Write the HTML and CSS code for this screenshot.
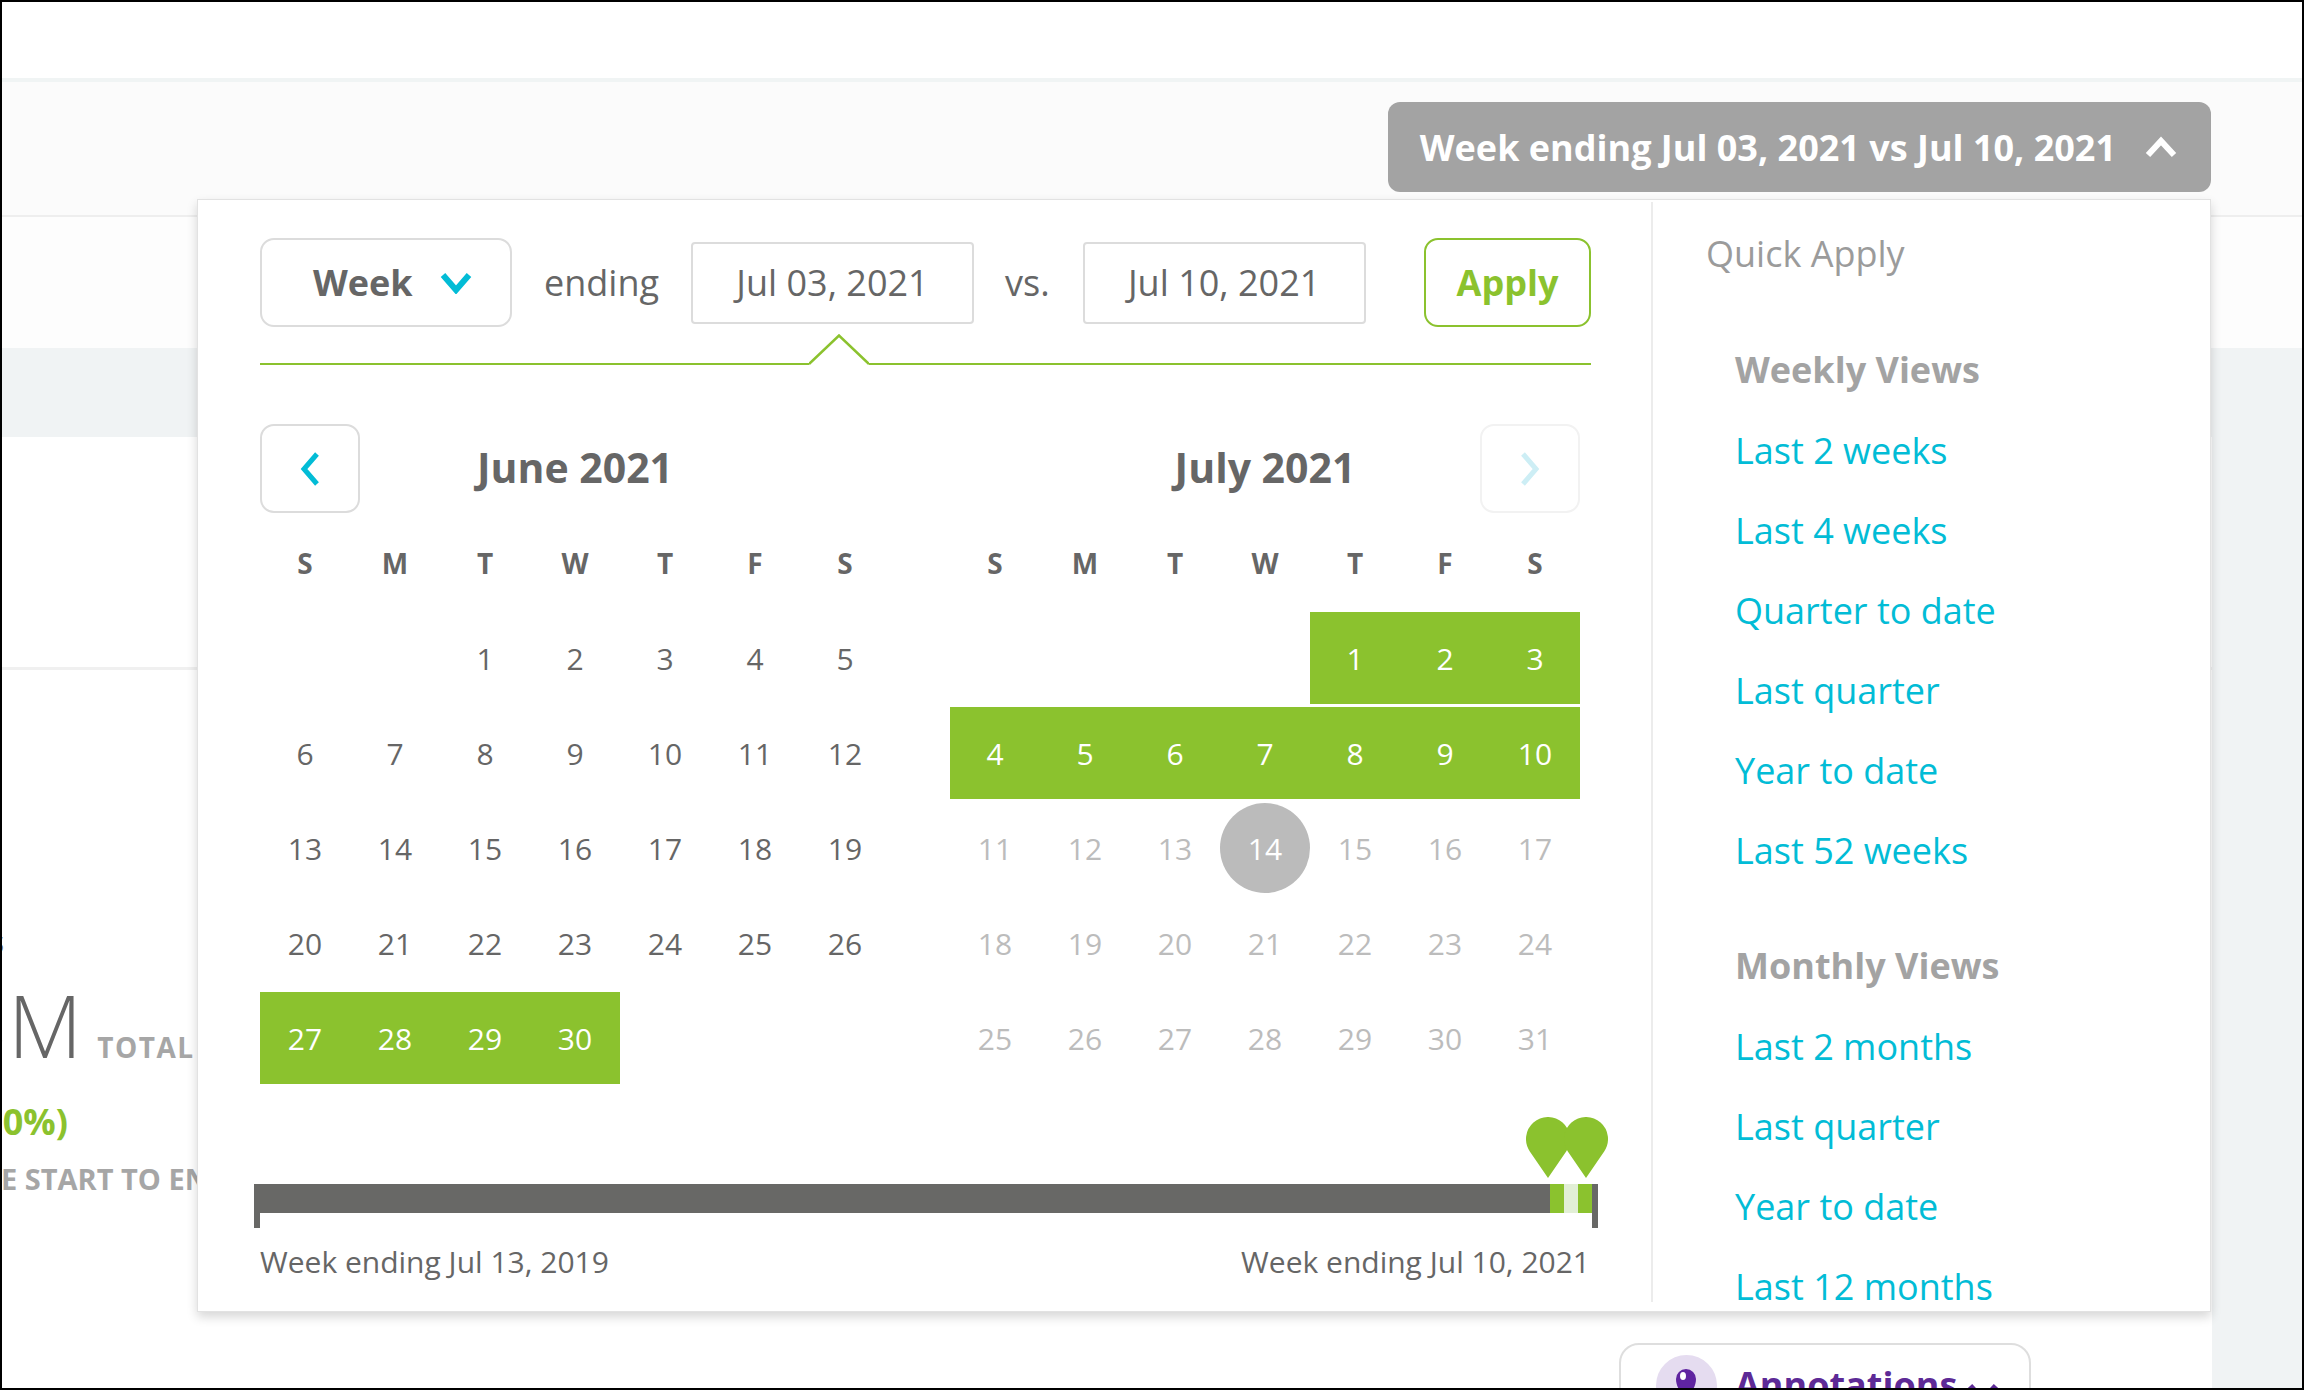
FILE: index.html
```html
<!DOCTYPE html>
<html lang="en">
<head>
<meta charset="utf-8">
<title>Date range picker</title>
<link rel="stylesheet" href="styles.css">
</head>
<body>
<div class="frame">
  <div class="topbar"></div>
  <div class="header">
    <div class="range">
      <div class="range-btn">
        <span>Week ending Jul 03, 2021 vs Jul 10, 2021</span>
        <svg class="caret" viewBox="0 0 32 22" width="32" height="22"><polyline points="3,19 16,5 29,19" fill="none" stroke="#fff" stroke-width="6"/></svg>
      </div>
      <div class="popup">
        <div class="picker">
          <div class="controls">
            <div class="select">
              <span>Week</span>
              <svg viewBox="0 0 32 22" width="32" height="22"><polyline points="3,3 16,18 29,3" fill="none" stroke="#02bcd6" stroke-width="6"/></svg>
            </div>
            <span class="word ending">ending</span>
            <div class="field">Jul 03, 2021</div>
            <span class="word vs">vs.</span>
            <div class="field field2">Jul 10, 2021</div>
            <div class="apply">Apply</div>
          </div>
          <div class="rule">
            <svg class="notch" viewBox="0 0 60 31" width="60" height="31"><polygon points="0,31 0,29 30,1 60,29 60,31" fill="#fff"/><polyline points="0,30 30,1.5 60,30" fill="none" stroke="#8bc22e" stroke-width="2.5"/></svg>
          </div>
          <div class="months">
            <div class="month">
              <div class="mhead">
                <div class="nav"><svg viewBox="0 0 22 34" width="22" height="34"><polyline points="18,2 5,17 18,32" fill="none" stroke="#02bcd6" stroke-width="5"/></svg></div>
                <div class="mtitle">June 2021</div>
                <div></div>
              </div>
              <div class="dow"><span>S</span><span>M</span><span>T</span><span>W</span><span>T</span><span>F</span><span>S</span></div>
              <div class="days">
                <span></span><span></span><span>1</span><span>2</span><span>3</span><span>4</span><span>5</span>
                <span>6</span><span>7</span><span>8</span><span>9</span><span>10</span><span>11</span><span>12</span>
                <span>13</span><span>14</span><span>15</span><span>16</span><span>17</span><span>18</span><span>19</span>
                <span>20</span><span>21</span><span>22</span><span>23</span><span>24</span><span>25</span><span>26</span>
                <span class="sel">27</span><span class="sel">28</span><span class="sel">29</span><span class="sel">30</span><span></span><span></span><span></span>
              </div>
            </div>
            <div class="month">
              <div class="mhead">
                <div></div>
                <div class="mtitle">July 2021</div>
                <div class="nav off"><svg viewBox="0 0 22 34" width="22" height="34"><polyline points="4,2 17,17 4,32" fill="none" stroke="#cdeef5" stroke-width="5"/></svg></div>
              </div>
              <div class="dow"><span>S</span><span>M</span><span>T</span><span>W</span><span>T</span><span>F</span><span>S</span></div>
              <div class="days">
                <span></span><span></span><span></span><span></span><span class="sel">1</span><span class="sel">2</span><span class="sel">3</span>
                <span class="sel">4</span><span class="sel">5</span><span class="sel">6</span><span class="sel">7</span><span class="sel">8</span><span class="sel">9</span><span class="sel">10</span>
                <span class="fut">11</span><span class="fut">12</span><span class="fut">13</span><span class="today"><i>14</i></span><span class="fut">15</span><span class="fut">16</span><span class="fut">17</span>
                <span class="fut">18</span><span class="fut">19</span><span class="fut">20</span><span class="fut">21</span><span class="fut">22</span><span class="fut">23</span><span class="fut">24</span>
                <span class="fut">25</span><span class="fut">26</span><span class="fut">27</span><span class="fut">28</span><span class="fut">29</span><span class="fut">30</span><span class="fut">31</span>
              </div>
            </div>
          </div>
          <div class="timeline">
            <div class="pins">
              <svg viewBox="0 0 44 61" width="44" height="61"><path d="M22 61 L3.83 34.4 A22 22 0 1 1 40.17 34.4 Z" fill="#8bc22e"/></svg>
              <svg class="pin2" viewBox="0 0 44 61" width="44" height="61"><path d="M22 61 L3.83 34.4 A22 22 0 1 1 40.17 34.4 Z" fill="#8bc22e"/></svg>
            </div>
            <div class="track">
              <span class="tick"></span>
              <div class="bar"><span class="seg g"></span><span class="seg l"></span><span class="seg g"></span></div>
              <span class="tick"></span>
            </div>
            <div class="ends"><span>Week ending Jul 13, 2019</span><span>Week ending Jul 10, 2021</span></div>
          </div>
        </div>
        <div class="quick">
          <div class="qa-title">Quick Apply</div>
          <div class="qgroup">
            <div class="qhead">Weekly Views</div>
            <div class="qlink">Last 2 weeks</div>
            <div class="qlink">Last 4 weeks</div>
            <div class="qlink">Quarter to date</div>
            <div class="qlink">Last quarter</div>
            <div class="qlink">Year to date</div>
            <div class="qlink">Last 52 weeks</div>
          </div>
          <div class="qgroup">
            <div class="qhead">Monthly Views</div>
            <div class="qlink">Last 2 months</div>
            <div class="qlink">Last quarter</div>
            <div class="qlink">Year to date</div>
            <div class="qlink">Last 12 months</div>
          </div>
        </div>
      </div>
    </div>
  </div>
  <div class="subheader"></div>
  <div class="band"></div>
  <div class="main">
    <div class="card">
      <div class="card-top"></div>
      <div class="stats">
        <div class="cut-row l1"><span class="lead">Conversions</span></div>
        <div class="cut-row l2"><span class="lead">24.3</span>M<span class="total">TOTAL</span></div>
        <div class="cut-row l3"><span class="lead">(+ 0%)</span></div>
        <div class="cut-row l4"><span class="lead">FROM TH</span>E START TO END OF PERIOD</div>
      </div>
      <div class="annot-row">
        <div class="annot">
          <span class="annot-ic"><svg viewBox="0 0 61 61" width="61" height="61"><path d="M30 46 C27 40 20 33 20 24 A10 10 0 0 1 40 24 C40 33 33 40 30 46 Z" fill="#5f24a0"/><ellipse cx="27" cy="21" rx="3" ry="4" fill="#fff"/></svg></span>
          <span class="annot-text">Annotations</span>
          <svg class="annot-chev" viewBox="0 0 32 22" width="32" height="22"><polyline points="3,3 16,17 29,3" fill="none" stroke="#5d2a96" stroke-width="6"/></svg>
        </div>
      </div>
    </div>
    <div class="aside"></div>
  </div>
</div>
</body>
</html>
```
FILE: styles.css
```css
* { box-sizing: border-box; margin: 0; padding: 0; }
html, body { background: #fff; }
body { margin: 0; font-family: "Open Sans", "DejaVu Sans", sans-serif; color: #666; }

.frame { width: 2304px; height: 1390px; border: 2px solid #000; overflow: hidden; display: flex; flex-direction: column; background: #fff; }
.topbar { height: 80px; flex: none; background: #fff; border-bottom: 4px solid #f0f4f4; }
.header { height: 135px; flex: none; display: flex; justify-content: flex-end; align-items: flex-start; padding: 20px 91px 0 0; background: #fbfbfb; border-bottom: 2px solid #eeeeee; position: relative; z-index: 5; }
.subheader { height: 131px; flex: none; background: #fdfdfd; }
.band { height: 89px; flex: none; background: #f0f3f4; }
.main { flex: 1; display: flex; background: #f0f3f4; min-height: 0; }
.card { width: 2210px; flex: none; background: #fff; overflow: hidden; }
.aside { flex: 1; }

/* header range button */
.range { position: relative; }
.range-btn { height: 90px; display: flex; align-items: center; gap: 29px; padding: 0 34px 0 32px; background: #a3a3a3; border-radius: 12px; color: #fff; font-weight: 700; font-size: 36px; white-space: nowrap; }
.caret { display: block; }

/* popup */
.popup { position: absolute; right: 0; top: 97px; width: 2014px; height: 1113px; background: #fff; border: 1px solid #e2e2e2; box-shadow: 0 5px 10px rgba(0,0,0,0.16); display: flex; }
.picker { width: 1453px; flex: none; padding: 38px 60px 0 62px; }

.controls { display: flex; align-items: center; height: 89px; }
.select { width: 252px; height: 89px; flex: none; border: 2px solid #dcdcdc; border-radius: 14px; display: flex; align-items: center; gap: 27px; padding-left: 51px; font-weight: 700; font-size: 36px; color: #666; }
.select svg { display: block; }
.word { font-size: 36px; color: #666; }
.ending { margin-left: 32px; }
.vs { margin-left: 31px; }
.field { margin-left: 32px; width: 283px; height: 82px; flex: none; border: 2px solid #dcdcdc; border-radius: 4px; display: flex; align-items: center; justify-content: center; font-size: 36px; color: #666; }
.field2 { margin-left: 33px; }
.apply { margin-left: auto; width: 167px; height: 89px; flex: none; border: 2px solid #8bc22e; border-radius: 14px; display: flex; align-items: center; justify-content: center; color: #8bc22e; font-weight: 700; font-size: 36px; }

.rule { margin-top: 36px; height: 2px; background: #8bc22e; position: relative; }
.notch { position: absolute; left: 549px; top: -29px; display: block; }

.months { display: flex; gap: 60px; margin-top: 59px; }
.month { width: 630px; flex: none; }
.mhead { height: 89px; display: grid; grid-template-columns: 100px 1fr 100px; align-items: center; }
.nav { width: 100px; height: 89px; border: 2px solid #dcdcdc; border-radius: 14px; display: flex; align-items: center; justify-content: center; }
.nav.off { border-color: #f2f2f2; }
.nav svg { display: block; }
.mtitle { text-align: center; font-weight: 700; font-size: 41px; color: #666; margin-top: -3px; }
.dow { display: grid; grid-template-columns: repeat(7, 90px); height: 99px; align-items: center; text-align: center; font-weight: 700; font-size: 28px; color: #666; }
.days { display: grid; grid-template-columns: repeat(7, 90px); grid-auto-rows: 92px; row-gap: 3px; }
.days span { display: flex; align-items: center; justify-content: center; font-size: 30px; color: #666; }
.days span.sel { background: #8bc22e; color: #fff; }
.days span.fut { color: #bcbcbc; }
.days span.today i { font-style: normal; width: 90px; height: 90px; border-radius: 50%; background: #bbbbbb; color: #fff; display: flex; align-items: center; justify-content: center; }

.timeline { margin-top: 33px; }
.pins { display: flex; height: 67px; padding-left: 1266px; align-items: flex-start; }
.pins svg { display: block; flex: none; }
.pins .pin2 { margin-left: -6px; }
.track { display: flex; align-items: flex-start; margin-left: -6px; width: 1344px; height: 44px; }
.tick { width: 6px; height: 44px; background: #686866; flex: none; }
.bar { flex: 1; height: 29px; background: #686866; display: flex; justify-content: flex-end; }
.seg { width: 14px; height: 29px; }
.seg.g { background: #8bc22e; }
.seg.l { background: #e2efd6; }
.ends { display: flex; justify-content: space-between; margin-top: 14px; padding-right: 1px; font-size: 30px; line-height: 40px; color: #666; }

/* quick apply */
.quick { flex: 1; margin: 2px 0 9px; border-left: 2px solid #ececec; overflow: hidden; padding: 12px 0 0 53px; }
.qa-title { font-size: 36px; line-height: 80px; color: #9b9b9b; }
.qgroup { padding-left: 29px; margin-top: 35px; }
.qgroup + .qgroup { margin-top: 34px; }
.qhead { font-weight: 700; font-size: 36px; line-height: 82px; color: #a3a3a3; }
.qlink { font-size: 36px; line-height: 80px; color: #02bcd6; white-space: nowrap; }

/* background page content */
.card-top { height: 233px; border-bottom: 3px solid #f0f0f0; }
.stats { padding-top: 252px; }
.cut-row { white-space: nowrap; }
.lead { display: inline-block; text-align: right; }
.l1 { font-weight: 700; font-size: 30px; line-height: 40px; color: #666; }
.l1 .lead { width: 300px; margin-left: -298px; }
.l2 { margin-top: 19px; font-weight: 300; font-size: 86px; line-height: 88px; color: #666; }
.l2 .lead { width: 200px; margin-left: -194px; }
.total { font-weight: 700; font-size: 28px; line-height: 1; letter-spacing: 1.5px; color: #a6a6a6; margin-left: 15px; }
.l3 { margin-top: 33px; font-weight: 700; font-size: 36px; line-height: 40px; color: #8bc22e; }
.l3 .lead { width: 300px; margin-left: -234px; }
.l4 { margin-top: 17px; font-weight: 700; font-size: 29px; line-height: 40px; color: #a6a6a6; }
.l4 .lead { width: 200px; margin-left: -201px; }

.annot-row { display: flex; justify-content: flex-end; padding-right: 181px; margin-top: 144px; }
.annot { width: 412px; height: 90px; flex: none; border: 2px solid #dedede; border-radius: 20px; display: flex; align-items: flex-start; padding: 10px 0 0 35px; }
.annot-ic { width: 61px; height: 61px; border-radius: 50%; background: #e5dcf0; flex: none; }
.annot-ic svg { display: block; }
.annot-text { margin-left: 18px; margin-top: 5px; font-weight: 700; font-size: 36px; color: #5d2a96; }
.annot-chev { margin-left: 10px; margin-top: 28px; display: block; }
```
